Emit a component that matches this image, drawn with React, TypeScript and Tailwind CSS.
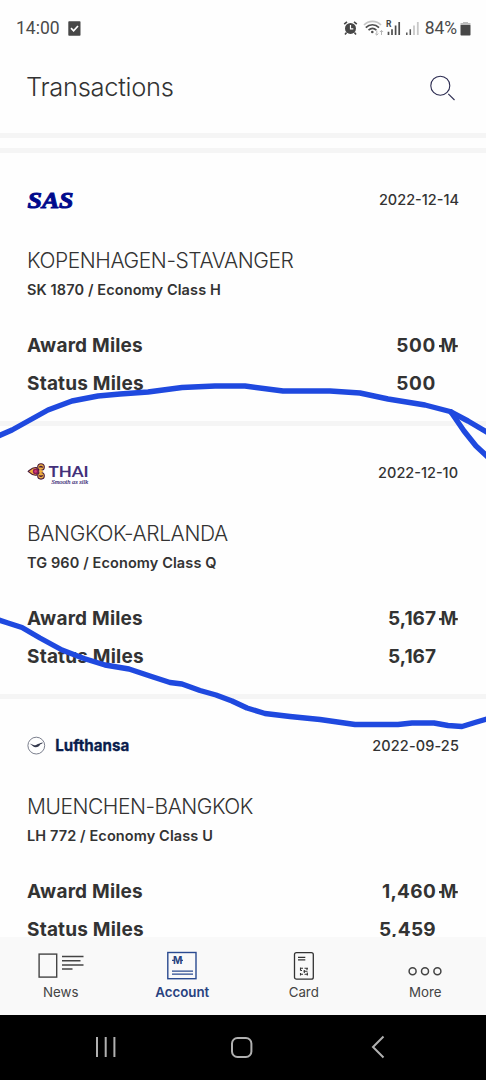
import type { ReactNode } from "react";

type Transaction = {
  logo: ReactNode;
  date: string;
  dateClass: string;
  route: string;
  routeClass: string;
  detail: string;
  award: string;
  status: string;
  valueClass: string;
};

function SasLogo() {
  return (
    <svg className="overflow-visible" width="64" height="30" viewBox="0 0 64 30">
      <text
        x="0.5"
        y="22.6"
        textLength="46"
        lengthAdjust="spacingAndGlyphs"
        fill="#000a8c"
        stroke="#000a8c"
        strokeWidth="1"
        fontFamily="Liberation Serif, serif"
        fontWeight="700"
        fontStyle="italic"
        fontSize="24"
      >
        SAS
      </text>
    </svg>
  );
}

function ThaiLogo() {
  return (
    <svg className="overflow-visible" width="64" height="30" viewBox="0 0 64 30">
      <g stroke="#4a1a3c" strokeWidth="1.1" fill="#f0b040">
        <path d="M1.2 13.4C4 11 5.6 9 9.4 9.6L12 13.4L9.4 17.2C5.6 17.8 4 16 1.2 13.4Z" />
        <circle cx="14" cy="9" r="3.3" />
        <circle cx="14" cy="17.8" r="3.3" />
      </g>
      <path d="M12.5 10.8L16.5 13.4L12.5 16Z" fill="#f0b040" />
      <circle cx="8.6" cy="13.4" r="2.8" fill="#8a1c54" />
      <circle cx="8.6" cy="13.4" r="1.3" fill="#d83a78" />
      <path d="M12.4 9.4A1.8 1.8 0 0 1 15.6 9.6M12.4 17.4A1.8 1.8 0 0 0 15.6 17.2" fill="none" stroke="#4a1a3c" strokeWidth="1.4" />
      <text
        x="21.5"
        y="18.9"
        textLength="40"
        lengthAdjust="spacingAndGlyphs"
        fill="#43307a"
        fontFamily="Lato, sans-serif"
        fontWeight="700"
        fontSize="15.5"
      >
        THAI
      </text>
      <text
        x="24.5"
        y="26"
        textLength="36.5"
        lengthAdjust="spacingAndGlyphs"
        fill="#43307a"
        stroke="#43307a"
        strokeWidth="0.2"
        fontFamily="Liberation Serif, serif"
        fontStyle="italic"
        fontSize="6.5"
      >
        Smooth as silk
      </text>
    </svg>
  );
}

function LufthansaLogo() {
  return (
    <svg className="overflow-visible" width="110" height="30" viewBox="0 0 110 30">
      <circle cx="9.3" cy="14.6" r="8.4" fill="none" stroke="#6c7080" strokeWidth="0.9" />
      <path d="M2.6 12.4L7.2 14.2C9.5 14.4 11.5 12 16 11.4L15.2 12.6L13.4 13.3C12.4 15.2 10.6 16.4 8.6 16.3C6.6 16 5 14 2.6 12.4Z" fill="#33384c" />
      <text
        x="28.3"
        y="20.4"
        textLength="74"
        lengthAdjust="spacingAndGlyphs"
        fill="#0a1d4d"
        stroke="#0a1d4d"
        strokeWidth="0.3"
        fontFamily="Inter, sans-serif"
        fontWeight="700"
        fontSize="15.5"
      >
        Lufthansa
      </text>
    </svg>
  );
}

const transactions: Transaction[] = [
  {
    logo: <SasLogo />,
    date: "2022-12-14",
    dateClass: "",
    route: "KOPENHAGEN-STAVANGER",
    routeClass: "tracking-[-0.42px]",
    detail: "SK 1870 / Economy Class H",
    award: "500",
    status: "500",
    valueClass: "tracking-[0.7px]",
  },
  {
    logo: <ThaiLogo />,
    date: "2022-12-10",
    dateClass: "mr-[1px]",
    route: "BANGKOK-ARLANDA",
    routeClass: "tracking-[-0.36px]",
    detail: "TG 960 / Economy Class Q",
    award: "5,167",
    status: "5,167",
    valueClass: "",
  },
  {
    logo: <LufthansaLogo />,
    date: "2022-09-25",
    dateClass: "tracking-[0.12px]",
    route: "MUENCHEN-BANGKOK",
    routeClass: "tracking-[-0.46px]",
    detail: "LH 772 / Economy Class U",
    award: "1,460",
    status: "5,459",
    valueClass: "tracking-[0.3px]",
  },
];

function MilesSign() {
  return (
    <svg className="ml-[3px] shrink-0 overflow-visible" width="20" height="20" viewBox="0 0 20 20">
      <text x="1.8" y="16.4" textLength="15.4" lengthAdjust="spacingAndGlyphs" fill="#333" fontFamily="Inter, sans-serif" fontWeight="700" fontSize="18.5">
        M
      </text>
      <path d="M0 10.2H4M14.8 10.2H18.8" stroke="#333" strokeWidth="2.2" />
    </svg>
  );
}

function TransactionCard({ item }: { item: Transaction }) {
  return (
    <section className="h-[273px] shrink-0 border-b-[5px] border-[#f5f5f5] px-[27px] pt-8 text-[#333]">
      <div className="flex h-[30px] items-center justify-between">
        {item.logo}
        <span className={`-mt-px text-[14.5px] font-medium ${item.dateClass}`}>{item.date}</span>
      </div>
      <h2 className={`mt-[33px] h-[26px] text-[21px] leading-[26px] font-light whitespace-nowrap ${item.routeClass}`}>{item.route}</h2>
      <p className="mt-[6px] h-5 text-[14.5px] leading-5 font-semibold tracking-[0.11px] whitespace-nowrap">{item.detail}</p>
      <div className="mt-[34px] flex h-6 items-center justify-between text-[19px] font-bold">
        <span className="tracking-[0.2px]">Award Miles</span>
        <span className="flex items-center">
          <span className={item.valueClass}>{item.award}</span>
          <MilesSign />
        </span>
      </div>
      <div className="mt-[14px] flex h-6 items-center justify-between text-[19px] font-bold">
        <span className="tracking-[0.2px]">Status Miles</span>
        <span className={`mr-[23px] ${item.valueClass}`}>{item.status}</span>
      </div>
    </section>
  );
}

function StatusBar() {
  return (
    <div className="flex h-14 shrink-0 items-center justify-between pr-[15px] pl-4 text-[#4a4a4a]">
      <div className="flex items-center gap-2">
        <span className="font-[Roboto] text-[17.5px]">14:00</span>
        <svg width="13" height="15" viewBox="0 0 13 15">
          <rect x="0.3" y="0.3" width="12.2" height="14.4" rx="0.8" fill="#474747" />
          <path d="M3 7.2L5.6 9.8L10 5" fill="none" stroke="#fff" strokeWidth="1.7" />
        </svg>
      </div>
      <div className="flex items-center">
        <svg width="78" height="20" viewBox="0 0 78 20">
          <circle cx="7.5" cy="10.4" r="5.5" fill="#474747" />
          <path d="M1.2 6.2L4 3.8M13.8 6.2L11 3.8M3.6 14.5L2 16.4M11.4 14.5L13 16.4" stroke="#474747" strokeWidth="1.6" />
          <path d="M7.5 7V10.8H10.3" fill="none" stroke="#fff" strokeWidth="1.2" />
          <path d="M21 7C25.5 2.2 33.5 2.2 38 7" fill="none" stroke="#c4c4c4" strokeWidth="1.6" />
          <path d="M22.8 9.6C26.5 5.8 32.3 5.8 36 9.6M25.5 12.2C28 9.9 31 9.9 33.4 12.2" fill="none" stroke="#4d4d4d" strokeWidth="1.6" />
          <circle cx="29.3" cy="14" r="1.3" fill="#4d4d4d" />
          <path d="M33.8 12.5V17M32.2 15.6L33.8 17.2L35.4 15.6M38.5 17V12.5M36.9 14L38.5 12.4L40.1 14" fill="none" stroke="#b5b5b5" strokeWidth="1" />
          <text x="43" y="8.8" fontFamily="Roboto, sans-serif" fontWeight="700" fontSize="8.5" fill="#444">R</text>
          <path d="M45.5 13.8V17M49 11.2V17M52.6 7.5V17M56.2 4V17" stroke="#4d4d4d" strokeWidth="1.7" />
          <path d="M63.8 14.5V17M67.3 11.2V17" stroke="#555" strokeWidth="1.5" />
          <path d="M71 7.5V17M74.8 4V17" stroke="#c8c8c8" strokeWidth="1.8" />
        </svg>
        <span className="ml-1 font-[Roboto] text-[17.5px] tracking-[-0.1px]">84%</span>
        <svg className="ml-[3px]" width="11" height="15" viewBox="0 0 11 15">
          <path d="M3 1H8V2H10.5V5H0.5V2H3Z" fill="#bdbdbd" />
          <rect x="0.5" y="4" width="10" height="10.6" rx="0.8" fill="#474747" />
        </svg>
      </div>
    </div>
  );
}

function TabBar() {
  return (
    <nav className="grid h-[78px] shrink-0 grid-cols-4 bg-[#f9f9f9] pt-3 text-[13.3px] text-[#444]">
      <div className="flex flex-col items-center">
        <svg width="46" height="32" viewBox="0 0 46 32" fill="none" stroke="#444">
          <rect x="1.1" y="5.1" width="17.6" height="23" strokeWidth="1.4" />
          <path d="M24 7.5H45.5M24 11.8H42.5M24 16H45.5M24 20H34.5" strokeWidth="1.4" />
        </svg>
        <span className="-mt-px leading-6">News</span>
      </div>
      <div className="flex flex-col items-center text-[#28427f]">
        <svg width="32" height="32" viewBox="0 0 32 32" fill="none" stroke="#2a4a90">
          <rect x="1.8" y="3.5" width="28.2" height="26.2" strokeWidth="1.4" />
          <path d="M6 22.2H27M6 25.2H27" strokeWidth="1.3" />
          <path d="M6 11.4H8.5M14.5 11.4H17" strokeWidth="1.3" />
          <text x="7.1" y="15" fill="#28427f" stroke="none" fontFamily="Inter, sans-serif" fontWeight="700" fontSize="10">M</text>
        </svg>
        <span className="-mt-px leading-6 font-semibold">Account</span>
      </div>
      <div className="flex flex-col items-center">
        <svg width="22" height="32" viewBox="0 0 22 32" fill="none" stroke="#333">
          <rect x="1.5" y="3.6" width="18.8" height="26.6" rx="2" strokeWidth="1.3" />
          <path d="M5 8.3H12.3M5 10.9H12.3" strokeWidth="1.2" />
          <path d="M7 19.3H10M11.5 19.3H15M7.5 21.5H9M10.5 22.3H14.5M7 25.3H10M11.5 25.3H15M7.5 18.5V21.5M14 18.8V21M11.3 21V24M7.5 24V26.5M14.3 23.5V26.5" strokeWidth="1.1" />
        </svg>
        <span className="-mt-px leading-6">Card</span>
      </div>
      <div className="flex flex-col items-center">
        <svg width="34" height="32" viewBox="0 0 34 32" fill="none" stroke="#444" strokeWidth="1.5">
          <circle cx="4.6" cy="22.3" r="3.5" />
          <circle cx="17" cy="22.3" r="3.5" />
          <circle cx="29.4" cy="22.3" r="3.5" />
        </svg>
        <span className="-mt-px leading-6">More</span>
      </div>
    </nav>
  );
}

function MarkerLine() {
  return (
    <svg
      className="pointer-events-none absolute inset-0"
      width="486"
      height="1080"
      viewBox="0 0 486 1080"
      fill="none"
      stroke="#1f49df"
      strokeWidth="5.4"
      strokeLinecap="round"
      strokeLinejoin="round"
    >
      <path d="M-4 437L12 430L30 420L48 410L72 401L98 396L120 394L148 392L182 387.5L215 386L245 386L283 391H330L360 393L388 399L425 405L450 411.5L468 421L490 434" />
      <path d="M451 412L464 431L476 446L490 459" />
      <path d="M-4 619L8 623L22 627.5L40 638L62 650L84 658.5L105 665L129 669L150 676L170 682.5L182 684L200 690.5L216 695L232 701L247 708L265 713.5L290 716.5L320 719.5L355 724.5H398L412 723H434L448 725.5L462 726.5L475 722.5L490 718" />
    </svg>
  );
}

export default function App() {
  return (
    <div className="relative flex h-[1080px] w-[486px] flex-col overflow-hidden bg-[#fefefe] font-[Inter,sans-serif]">
      <StatusBar />
      <header className="flex h-[77px] shrink-0 items-start justify-between pr-[30px] pl-[26px] pt-[15px]">
        <h1 className="text-[25.5px] leading-8 font-light tracking-[-0.3px] text-[#333]">Transactions</h1>
        <svg className="mt-1" width="27" height="27" viewBox="0 0 27 27" fill="none" stroke="#2b2b50" strokeWidth="1.1">
          <circle cx="11.3" cy="10.7" r="9.5" />
          <path d="M19.3 18.8L25.5 25" />
        </svg>
      </header>
      <div className="h-5 shrink-0 border-y-[5px] border-[#f5f5f5]" />
      <main className="flex min-h-0 flex-1 flex-col overflow-hidden">
        {transactions.map((item) => (
          <TransactionCard key={item.route} item={item} />
        ))}
      </main>
      <TabBar />
      <div className="h-[65px] shrink-0 bg-black">
        <svg width="486" height="65" viewBox="0 0 486 65" fill="none" stroke="#b0b0b0" strokeWidth="2">
          <path d="M97 22V42M105.7 22V42M114.4 22V42" />
          <rect x="232" y="23" width="19.4" height="19" rx="5.5" />
          <path d="M383.5 21.5L373 32L383.5 42.5" />
        </svg>
      </div>
      <MarkerLine />
    </div>
  );
}
